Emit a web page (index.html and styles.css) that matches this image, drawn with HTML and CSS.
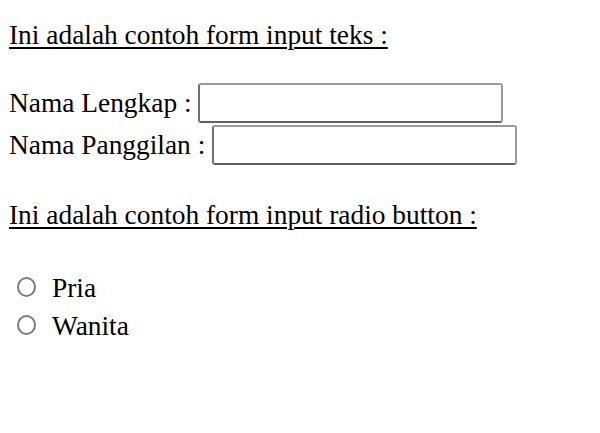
FILE: index.html
```html
<!DOCTYPE html>
<html>
<head>
<meta charset="utf-8">
<link rel="stylesheet" href="styles.css">
</head>
<body>
<div class="page">
  <div class="title title-first"><u>Ini adalah contoh form input teks :</u></div>
  <div class="field">
    <label>Nama Lengkap :&nbsp;</label><input type="text" class="text-input">
  </div>
  <div class="field">
    <label>Nama Panggilan :&nbsp;</label><input type="text" class="text-input">
  </div>
  <div class="title title-second"><u>Ini adalah contoh form input radio button :</u></div>
  <div class="radio-list">
    <label class="radio-row"><input type="radio" name="jk" class="radio">Pria</label>
    <label class="radio-row"><input type="radio" name="jk" class="radio">Wanita</label>
  </div>
</div>
</body>
</html>
```
FILE: styles.css
```css
html, body {
  margin: 0;
  padding: 0;
  background: #ffffff;
}

.page {
  padding-left: 9px;
  font-family: "Liberation Serif", "Times New Roman", serif;
  font-size: 27.4px;
  color: #000;
  line-height: 32px;
}

.title u {
  text-decoration-thickness: 2px;
  text-underline-offset: 3px;
}

.title-first {
  margin-top: 19px;
  height: 32px;
}

.field {
  display: flex;
  align-items: center;
  height: 42px;
}

.title + .field {
  margin-top: 31px;
}

.text-input {
  box-sizing: border-box;
  width: 305px;
  height: 40px;
  margin: 0;
  padding: 0;
  border: 2px solid #9a9a9a;
  border-left-color: #707070;
  border-bottom-color: #606060;
  border-radius: 3px;
  background: #fff;
  outline: none;
}

.title-second {
  margin-top: 33px;
  height: 32px;
}

.radio-list {
  margin-top: 38px;
  display: flex;
  flex-direction: column;
}

.radio-row {
  display: flex;
  align-items: center;
  height: 38px;
}

.radio {
  appearance: none;
  -webkit-appearance: none;
  box-sizing: border-box;
  width: 19px;
  height: 20px;
  margin: 0 16px 0 8px;
  border: 2px solid #7a7a7a;
  border-radius: 50%;
  background: #fff;
  position: relative;
  top: -1px;
}
```
